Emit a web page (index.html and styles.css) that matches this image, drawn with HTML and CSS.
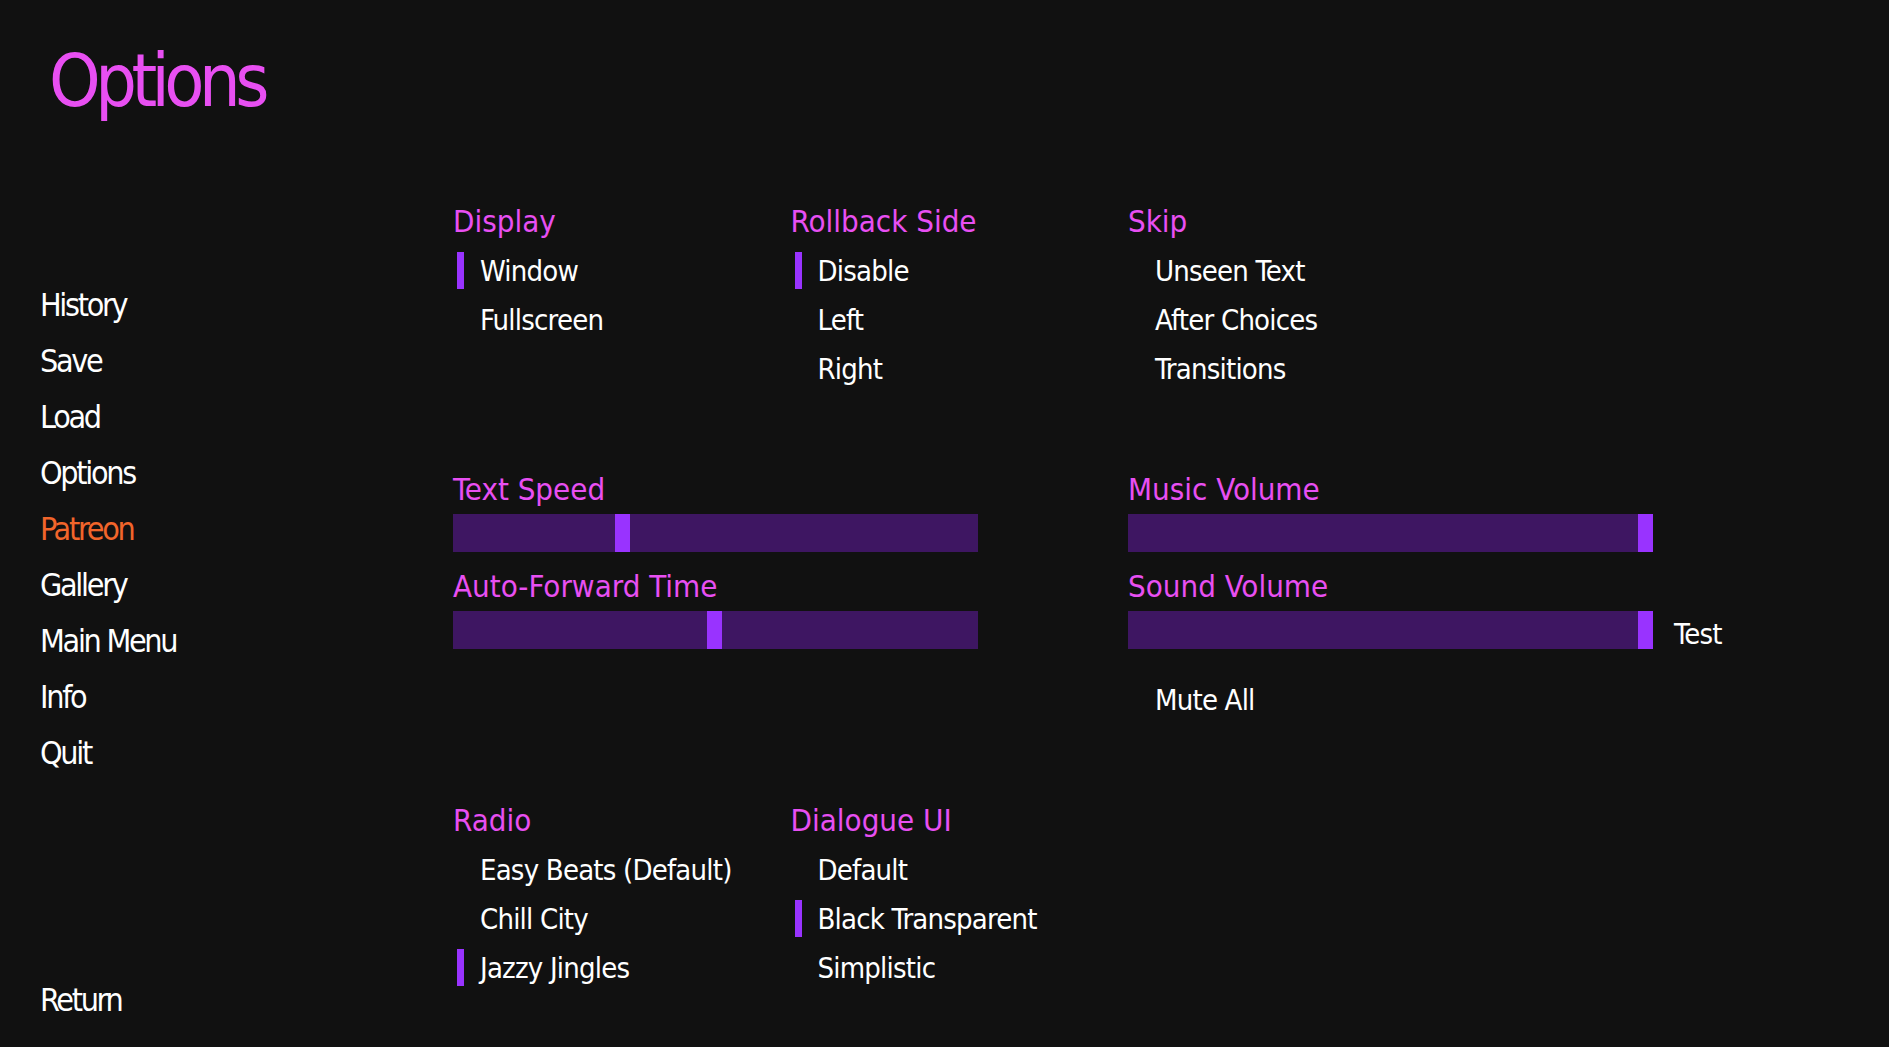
FILE: index.html
```html
<!DOCTYPE html>
<html lang="en">
<head>
    <meta charset="UTF-8">
    <meta name="viewport" content="width=device-width, initial-scale=1.0">
    <title>Options</title>
    <link rel="stylesheet" href="styles.css">
</head>
<body>
    <div class="screen">
        <!-- left menu -->
        <aside class="sidebar">
            <h1 class="title">Options</h1>
            <nav class="nav">
                <a class="nav-link">History</a>
                <a class="nav-link">Save</a>
                <a class="nav-link">Load</a>
                <a class="nav-link">Options</a>
                <a class="nav-link patreon">Patreon</a>
                <a class="nav-link">Gallery</a>
                <a class="nav-link">Main Menu</a>
                <a class="nav-link">Info</a>
                <a class="nav-link">Quit</a>
            </nav>
            <a class="nav-link return">Return</a>
        </aside>

        <main class="panel">
            <section class="row">
                <div class="group">
                    <h2 class="label">Display</h2>
                    <div class="choice selected">Window</div>
                    <div class="choice">Fullscreen</div>
                </div>
                <div class="group">
                    <h2 class="label">Rollback Side</h2>
                    <div class="choice selected">Disable</div>
                    <div class="choice">Left</div>
                    <div class="choice">Right</div>
                </div>
                <div class="group">
                    <h2 class="label">Skip</h2>
                    <div class="choice">Unseen Text</div>
                    <div class="choice">After Choices</div>
                    <div class="choice">Transitions</div>
                </div>
            </section>

            <section class="row sliders">
                <div class="slider-group">
                    <h2 class="label">Text Speed</h2>
                    <div class="slider"><div class="track"><span class="thumb" style="--v: 0.318"></span></div></div>
                    <h2 class="label">Auto-Forward Time</h2>
                    <div class="slider"><div class="track"><span class="thumb" style="--v: 0.498"></span></div></div>
                </div>
                <div class="slider-group">
                    <h2 class="label">Music Volume</h2>
                    <div class="slider"><div class="track"><span class="thumb" style="--v: 1"></span></div></div>
                    <h2 class="label">Sound Volume</h2>
                    <div class="slider">
                        <div class="track"><span class="thumb" style="--v: 1"></span></div>
                        <span class="test">Test</span>
                    </div>
                    <div class="choice mute">Mute All</div>
                </div>
            </section>

            <section class="row">
                <div class="group">
                    <h2 class="label">Radio</h2>
                    <div class="choice">Easy Beats (Default)</div>
                    <div class="choice">Chill City</div>
                    <div class="choice selected">Jazzy Jingles</div>
                </div>
                <div class="group">
                    <h2 class="label">Dialogue UI</h2>
                    <div class="choice">Default</div>
                    <div class="choice selected">Black Transparent</div>
                    <div class="choice">Simplistic</div>
                </div>
            </section>
        </main>
    </div>
</body>
</html>
```

FILE: styles.css
```css
/* options screen */
body {
    margin: 0;
    background-color: #111111;
    color: #ffffff;
    font-family: "DejaVu Sans Condensed", "DejaVu Sans", sans-serif;
    font-stretch: semi-condensed;
}

.screen {
    display: flex;
    height: 100vh;
}

/* sidebar */
.sidebar {
    width: 413px;
    padding: 41px 0 19px 40px;
    display: flex;
    flex-direction: column;
}

.title {
    margin: 0 0 156px 9px;
    font-size: 73px;
    font-weight: normal;
    line-height: 80px;
    color: #e84ff2;
    letter-spacing: -5.5px;
}

.nav {
    display: flex;
    flex-direction: column;
}

.nav-link {
    font-size: 32px;
    line-height: 56px;
    color: #ffffff;
    letter-spacing: -2.3px;
}

.nav-link.patreon {
    color: #f2652b;
}

.nav-link.return {
    margin-top: auto;
}

/* main panel */
.panel {
    padding-top: 203px;
    display: flex;
    flex-direction: column;
    gap: 84px;
}

.row {
    display: grid;
    grid-template-columns: repeat(3, 337.5px);
}

.row.sliders {
    grid-template-columns: 675px auto;
}

.group {
    display: flex;
    flex-direction: column;
    gap: 12px;
}

.label {
    margin: 0;
    font-size: 31px;
    font-weight: normal;
    line-height: 37px;
    color: #e84ff2;
    letter-spacing: 0;
}

.choice {
    display: flex;
    align-items: center;
    height: 37px;
    font-size: 29px;
    letter-spacing: -0.8px;
}

.choice::before {
    content: "";
    width: 7px;
    height: 37px;
    margin: 0 16px 0 4px;
}

.choice.selected::before {
    background-color: #9933ff;
}

/* sliders */
.slider-group {
    display: flex;
    flex-direction: column;
}

.slider {
    display: flex;
    align-items: flex-start;
    margin: 6px 0 16px;
}

.track {
    display: flex;
    width: 525px;
    height: 38px;
    background-color: #3e1662;
}

.thumb {
    width: 15px;
    height: 38px;
    margin-left: calc((100% - 15px) * var(--v));
    background-color: #9933ff;
}

.test {
    margin: 5px 0 0 21px;
    font-size: 29px;
    line-height: 37px;
    letter-spacing: -0.8px;
}

.choice.mute {
    margin-top: 12px;
}
```
